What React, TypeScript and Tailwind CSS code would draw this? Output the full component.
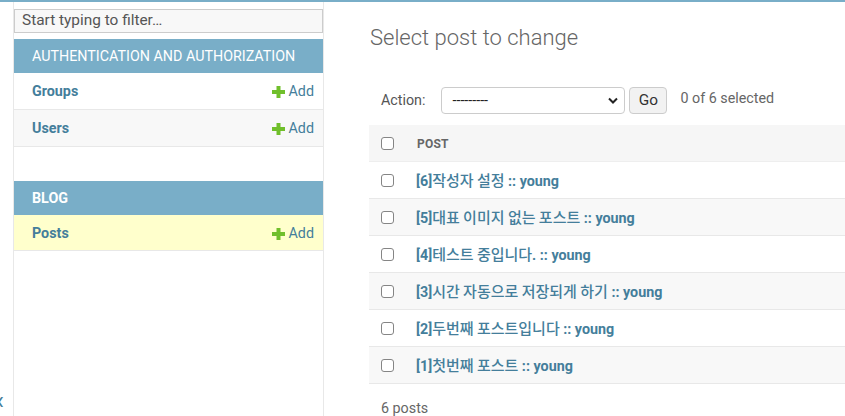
import React from "react";

const posts = [
  "[6]작성자 설정 :: young",
  "[5]대표 이미지 없는 포스트 :: young",
  "[4]테스트 중입니다. :: young",
  "[3]시간 자동으로 저장되게 하기 :: young",
  "[2]두번째 포스트입니다 :: young",
  "[1]첫번째 포스트 :: young",
];

function Mixed({ text }: { text: string }) {
  const parts = text.split(/([\uAC00-\uD7A3]+(?:\s[\uAC00-\uD7A3]+)*)/);
  return (
    <>
      {parts.map((p, i) =>
        /[\uAC00-\uD7A3]/.test(p) ? (
          <span
            key={i}
            className="font-medium text-[15px]"
            style={{ fontFamily: '"Noto Sans CJK KR", sans-serif' }}
          >
            {p}
          </span>
        ) : (
          <span key={i}>{p}</span>
        )
      )}
    </>
  );
}

function Plus() {
  return (
    <svg width="13" height="12" viewBox="0 0 13 12" className="mr-[4px]">
      <rect x="4.5" y="0" width="4" height="12" fill="#70bf2b" />
      <rect x="0" y="4" width="13" height="4" fill="#70bf2b" />
    </svg>
  );
}

function Checkbox() {
  return (
    <div className="w-[13px] h-[13px] rounded-[3px] border border-[#858585] bg-white shrink-0" />
  );
}

function ModelRow({ name, bg }: { name: string; bg: string }) {
  return (
    <div
      className={`h-[37px] flex items-center justify-between pl-[18px] pr-[9px] pt-[2px] border-b border-[#e8e8e8] ${bg}`}
    >
      <span className="text-[14.3px] font-bold text-[#447e9b]">{name}</span>
      <span className="flex items-center text-[14.3px] text-[#447e9b]">
        <Plus />
        Add
      </span>
    </div>
  );
}

export default function App() {
  return (
    <div
      className="w-[845px] h-[416px] overflow-hidden bg-white border-t-2 border-[#79aec8] flex text-[#333]"
      style={{ fontFamily: 'Roboto, "Noto Sans CJK KR", sans-serif' }}
    >
      {/* toggle column */}
      <div className="w-[13px] shrink-0 flex flex-col justify-end overflow-hidden pb-[3px]">
        <span className="text-[26px] leading-[26px] text-[#447e9b] ml-[-8px]">«</span>
      </div>

      {/* sidebar */}
      <div className="w-[311px] shrink-0 border-l border-r border-[#e8e8e8] flex flex-col pt-[7px]">
        <div className="h-[24px] border border-[#cccccc] bg-[#f8f8f8] flex items-center pl-[7px] text-[15.4px] text-[#555]">
          Start typing to filter…
        </div>
        <div className="mt-[6px] h-[34px] bg-[#79aec8] flex items-center pl-[18px] pt-[1px] text-white text-[14.3px]">
          AUTHENTICATION AND AUTHORIZATION
        </div>
        <ModelRow name="Groups" bg="bg-white" />
        <ModelRow name="Users" bg="bg-[#f8f8f8]" />
        <div className="mt-[34px] h-[34px] bg-[#79aec8] flex items-center pl-[18px] pt-[1px] text-white text-[14.3px] font-bold">
          BLOG
        </div>
        <div className="h-[36px] flex items-center justify-between pl-[18px] pr-[9px] pt-[2px] border-b border-[#e8e8e8] bg-[#ffffcc]">
          <span className="text-[14.3px] font-bold text-[#447e9b]">Posts</span>
          <span className="flex items-center text-[14.3px] text-[#447e9b]">
            <Plus />
            Add
          </span>
        </div>
      </div>

      {/* main */}
      <div className="flex-1 pl-[45px] pt-[22px] overflow-hidden">
        <h1 className="text-[22px] leading-[28px] font-light text-[#666] pl-[1px]">Select post to change</h1>
        <div className="mt-[28px] h-[45px] flex items-start pt-[7px] pl-[12px] text-[14.3px] text-[#666]">
          <span className="h-[27px] flex items-center mr-[16px] text-[#555]">Action:</span>
          <div className="w-[184px] h-[27px] border border-[#cccccc] rounded-[4px] bg-white flex items-center justify-between pl-[10px] pr-[6px]">
            <span className="text-[14.3px] text-[#222] leading-none">---------</span>
            <svg width="10" height="7" viewBox="0 0 10 7">
              <path d="M1 1.5 L5 5.5 L9 1.5" stroke="#222" strokeWidth="2" fill="none" />
            </svg>
          </div>
          <div className="ml-[4px] w-[38px] h-[27px] border border-[#cccccc] rounded-[4px] bg-[#f2f2f2] flex items-center justify-center text-[15.4px] text-[#333]">
            Go
          </div>
          <span className="ml-[13px] h-[24px] flex items-center text-[#666]">0 of 6 selected</span>
        </div>
        <div className="w-[600px]">
          <div className="h-[37px] bg-[#f6f6f6] border-b border-[#eeeeee] flex items-center pl-[12px]">
            <Checkbox />
            <span className="ml-[23px] pt-[1px] text-[12px] font-bold text-[#666] tracking-[0.2px]">POST</span>
          </div>
          {posts.map((p, i) => (
            <div
              key={p}
              className={`h-[37px] border-b border-[#e8e8e8] flex items-center pl-[12px] ${
                i % 2 === 0 ? "bg-white" : "bg-[#f8f8f8]"
              }`}
            >
              <Checkbox />
              <span className="ml-[22px] pt-[1px] text-[14.3px] font-bold text-[#447e9b] flex items-baseline whitespace-pre">
                <Mixed text={p} />
              </span>
            </div>
          ))}
          <div className="pt-[14px] pl-[12px] text-[14.3px] text-[#666]">6 posts</div>
        </div>
      </div>
    </div>
  );
}
